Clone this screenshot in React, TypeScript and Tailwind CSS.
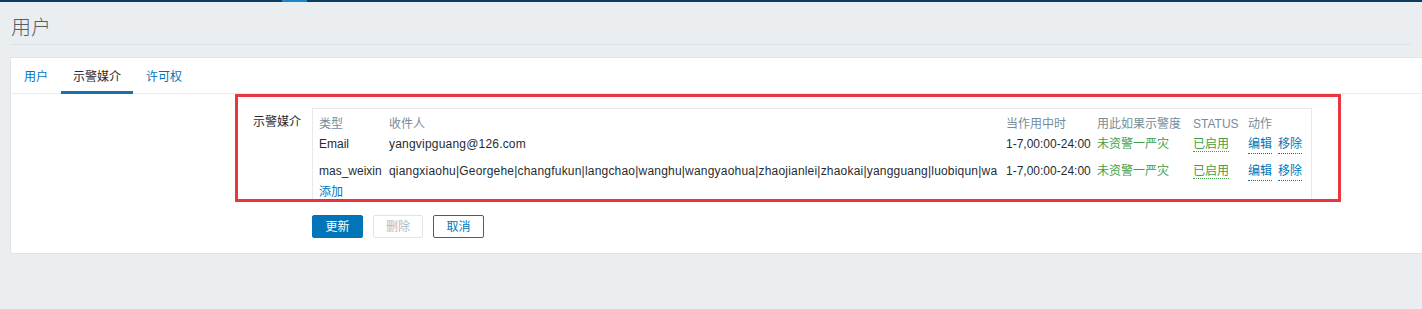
import React from "react";

const recipients =
  "qiangxiaohu|Georgehe|changfukun|langchao|wanghu|wangyaohua|zhaojianlei|zhaokai|yangguang|luobiqun|wa";

const media = [
  { type: "Email", to: "yangvipguang@126.com", when: "1-7,00:00-24:00", h: "h-[27px]" },
  { type: "mas_weixin", to: recipients, when: "1-7,00:00-24:00", h: "h-[21px]" },
];

const cols = "grid grid-cols-[70px_617px_91px_96px_55px_65px] items-start leading-[18px]";

function DotLink({ children, green }: { children: React.ReactNode; green?: boolean }) {
  return (
    <span
      className={
        "cursor-pointer border-b border-dotted " +
        (green ? "text-[#429e47] border-[#429e47]" : "text-[#0275b8] border-[#0275b8]")
      }
    >
      {children}
    </span>
  );
}

export default function App() {
  return (
    <div
      className="min-h-[309px] bg-[#ebeef0] text-[12px] text-[#1f2c33]"
      style={{ fontFamily: '"Liberation Sans", Arial, "Noto Sans CJK SC", sans-serif' }}
    >
      {/* top strip */}
      <div className="flex h-[2px] bg-[#0b3d5e]">
        <div className="ml-[282px] w-[25px] bg-[#1a85c7]" />
      </div>

      {/* page header */}
      <div className="mx-[10px] flex h-[43px] items-center border-b border-[#dde3e6] pl-[1px] pt-[9px]">
        <h1 className="text-[20px] font-light text-[#555e64]">用户</h1>
      </div>

      {/* panel */}
      <div className="ml-[10px] mt-[12px] h-[197px] border-b border-l border-t border-[#dfe4e7] bg-white">
        {/* tabs */}
        <div className="flex h-[36px] border-b border-[#ebeef0]">
          <div className="flex items-center px-[13px] pt-[2px] text-[#0275b8]">用户</div>
          <div className="-mb-[1px] flex items-center border-b-[3px] border-[#1f6ea8] px-[12px] pt-[4px] text-[#1f2c33]">
            示警媒介
          </div>
          <div className="flex items-center px-[13px] pt-[2px] text-[#0275b8]">许可权</div>
        </div>

        {/* red highlighted form row */}
        <div className="ml-[224px] flex h-[108px] w-[1106px] border-[3px] border-[#e8383d] pt-[11px]">
          <div className="w-[63px] pt-[5px] text-right">示警媒介</div>
          <div className="ml-[11px] w-[1000px] border-l border-r border-t border-[#e6eaec] pl-[6px]">
            <div className={cols + " h-[26px] pt-[6px] text-[#768d99]"}>
              <div>类型</div>
              <div>收件人</div>
              <div>当作用中时</div>
              <div>用此如果示警度</div>
              <div>STATUS</div>
              <div>动作</div>
            </div>
            {media.map((m) => (
              <div key={m.type} className={cols + " " + m.h}>
                <div className="whitespace-nowrap">{m.type}</div>
                <div className="w-[614px] overflow-hidden whitespace-nowrap tracking-[0.2px]">{m.to}</div>
                <div className="whitespace-nowrap">{m.when}</div>
                <div className="text-[#429e47]">未资警一严灾</div>
                <div>
                  <DotLink green>已启用</DotLink>
                </div>
                <div className="flex gap-[6px]">
                  <DotLink>编辑</DotLink>
                  <DotLink>移除</DotLink>
                </div>
              </div>
            ))}
            <div className="leading-[18px]">
              <DotLink>添加</DotLink>
            </div>
          </div>
        </div>

        {/* buttons */}
        <div className="ml-[301px] mt-[13px] flex gap-[10px]">
          <button className="h-[23px] w-[51px] rounded-[2px] border border-[#0275b8] bg-[#0275b8] text-white">
            更新
          </button>
          <button className="h-[23px] w-[50px] rounded-[2px] border border-[#dfe4e7] bg-white text-[#acbbc2]">
            删除
          </button>
          <button className="h-[23px] w-[51px] rounded-[2px] border border-[#0275b8] bg-white text-[#0275b8]">
            取消
          </button>
        </div>
      </div>
    </div>
  );
}
